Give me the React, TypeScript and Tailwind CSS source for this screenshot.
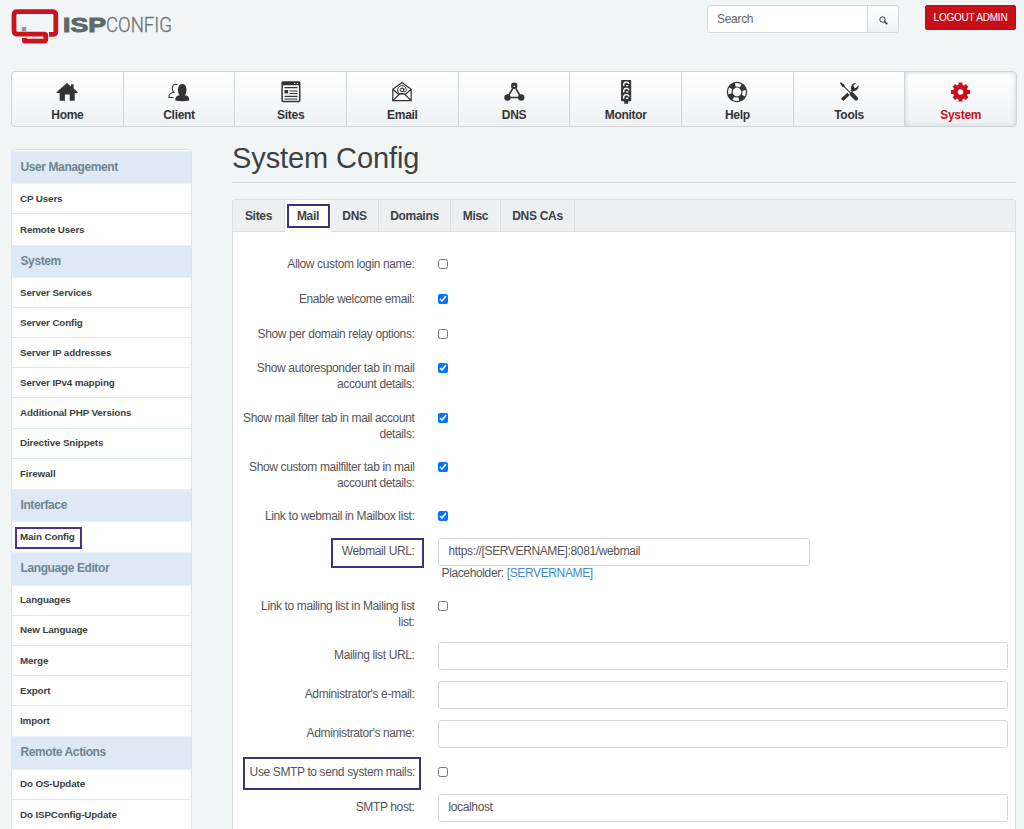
import type { ReactNode } from "react";
import clsx from "clsx";

function Logo() {
  return (
    <svg width="168" height="36" viewBox="0 0 168 36" className="mt-[9px]">
      <g fill="none" stroke="#c9141d" strokeWidth="4.8" strokeLinejoin="round">
        <path d="M38 25.400h3.800c2 0 3-1 3-3V6c0-2.500-1-3.400-3.400-3.400H6.400C4 2.600 3 3.500 3 6v15.500c0 2.500 1 3.600 3.400 3.600h26.400c1.400 0 2 .7 2 1.800v3c0 1.500-.8 2.300-2.300 2.300H13.500v-3.200" />
      </g>
      <rect x="10.800" y="18" width="4.400" height="4.400" fill="#8c9799" />
      <text x="52" y="22.700" textLength="43" lengthAdjust="spacingAndGlyphs" fill="#5e696b" stroke="#5e696b" strokeWidth="0.900" className="font-['Liberation_Sans',sans-serif] text-[19.500px] font-bold">
        ISP
      </text>
      <text x="95" y="22.700" textLength="66" lengthAdjust="spacingAndGlyphs" fill="#697476" stroke="#697476" strokeWidth="0.300" className="font-[Roboto,sans-serif] text-[19.500px] font-light">
        CONFIG
      </text>
    </svg>
  );
}

const icons: Record<string, ReactNode> = {
  Home: <path d="M12 3 16 6.400V4.300h2.600v4.300L22.700 12v1h-3v7.700h-5v-6.200H9.900v6.200H4.700V13h-3v-1z" />,
  Client: (
    <>
      <path d="M8.300 20.500c-.3-3.300 1.200-4.600 4.200-5.200-2.300-3.200-2.300-11.300 2.800-11.300s5 8.100 2.600 11.300c3 .6 4.600 1.900 4.300 5.200-4.500 1-9.400 1-13.900 0z" />
      <path d="M10.500 4.800C7.300 3.300 4.800 5.700 5.300 9c.2 1.500.8 2.600 1.500 3.300-2.500.4-5.200 1.400-4.800 5.200h4.500" fill="none" stroke="currentColor" strokeWidth="1.100" />
    </>
  ),
  Sites: (
    <>
      <rect x="3.100" y="2.100" width="17.600" height="19.300" rx="1" fill="none" stroke="currentColor" strokeWidth="1.500" />
      <path d="M3 2h18v3.200H3z" />
      <path d="M5.500 7.700h13M10.500 11h8M10.500 13.500h8M5.500 16.300h13M5.500 19h13" fill="none" stroke="currentColor" strokeWidth="1.200" />
      <path d="M5.500 10h3.600v3.500H5.500z" />
      <path d="M15 3.500h1.200m1.500 0h1.200" stroke="#fff" strokeWidth="1" />
    </>
  ),
  Email: (
    <>
      <path d="M2.800 9.300 12 2.500l9.200 6.800v11.400H2.800zM2.800 9.300l6.400 5.500m12-5.500-6.400 5.500M2.800 20.700 9 14.500c2-1.500 4-1.500 6 0l6.200 6.200" fill="none" stroke="currentColor" strokeWidth="1.200" />
      <circle cx="12" cy="9.900" r="1.800" fill="none" stroke="currentColor" strokeWidth="1" />
      <path d="M13.800 8v3c0 1.400 2.500 1.300 2.500-1.200 0-5.500-8.600-5.500-8.600.2 0 4 3.300 4.900 6 3.700" fill="none" stroke="currentColor" strokeWidth="1" />
    </>
  ),
  DNS: (
    <>
      <circle cx="12.200" cy="5.700" r="3.200" />
      <circle cx="5.500" cy="17.500" r="3.200" />
      <circle cx="19.200" cy="17.500" r="3.200" />
      <path d="m11 8-4.300 7.300M13.800 8.500l4 6.700M8 17.500h8" fill="none" stroke="currentColor" strokeWidth="1.600" />
      <circle cx="12.200" cy="6.200" r="0.800" fill="#fff" />
    </>
  ),
  Monitor: (
    <>
      <path d="M7.800 0h8.700c.5 0 .7.300.7.700v19.500c0 .7-.3 1-.9 1h-2.100v2.500h-4v-2.500H8c-.6 0-.9-.3-.9-1V.7c0-.4.2-.7.700-.7z" />
      <path d="M9.800 6c-1.200-4.400 4.400-5.200 5.200-2M9.800 12.300c-1.200-4.400 4.400-5.200 5.200-2M9.800 18.600c-1.200-4.400 4.400-5.200 5.200-2" fill="none" stroke="#fff" strokeWidth="1.500" />
      <path d="M12 5h2.300v1.300H12zM12 11.300h2.300v1.300H12zM12 17.600h2.300v1.300H12z" fill="#fff" />
    </>
  ),
  Help: (
    <>
      <circle cx="12" cy="12" r="9.600" fill="none" stroke="currentColor" strokeWidth="1.200" />
      <circle cx="12" cy="12" r="5" fill="none" stroke="currentColor" strokeWidth="1.200" />
      <circle cx="12" cy="12" r="7.300" fill="none" stroke="currentColor" strokeWidth="4.800" strokeDasharray="5.730 5.730" transform="rotate(30 12 12)" />
    </>
  ),
  Tools: (
    <>
      <path d="m2.800 3 1.100-.8 3.500 2.500.6 2 5.500 5.500c1-.5 1.900-.3 2.600.4l4.500 4.700c1.500 1.700-.8 4.400-2.700 2.900l-4.700-4.700c-.7-.8-.9-1.600-.4-2.500L7.200 7.600l-1.900-.8z" />
      <path d="M14.100 10.300c-.9-3.700 1.200-7.700 5.100-7.500l-2.700 3 .5 1.700 1.900.4 2.600-2.800c.8 3.600-2.200 6.400-5.200 6l-1.200 1.200-2-2zM10.400 12.800l2.100 2.100-5 5.200c-1.600 1.600-4.200-.8-2.600-2.400z" />
    </>
  ),
  System: (
    <>
      <circle cx="11.500" cy="12" r="5.100" fill="none" stroke="currentColor" strokeWidth="4.700" />
      <path
        d="M11.500 2.400v3.600M11.500 18v3.600M1.900 12h3.600M17.500 12h3.600M4.900 5.400l2.400 2.400M15.700 16.200l2.400 2.400M18.100 5.400l-2.400 2.400M7.300 16.200l-2.400 2.400"
        fill="none"
        stroke="currentColor"
        strokeWidth="3.900"
      />
    </>
  ),
};

const navItems = ["Home", "Client", "Sites", "Email", "DNS", "Monitor", "Help", "Tools", "System"];

const sidebar = [
  { title: "User Management", items: ["CP Users", "Remote Users"] },
  {
    title: "System",
    items: [
      "Server Services",
      "Server Config",
      "Server IP addresses",
      "Server IPv4 mapping",
      "Additional PHP Versions",
      "Directive Snippets",
      "Firewall",
    ],
  },
  { title: "Interface", items: ["Main Config"] },
  { title: "Language Editor", items: ["Languages", "New Language", "Merge", "Export", "Import"] },
  { title: "Remote Actions", items: ["Do OS-Update", "Do ISPConfig-Update"] },
];

const tabs = [
  { label: "Sites", width: "w-[52px]" },
  { label: "Mail", width: "w-[46px]" },
  { label: "DNS", width: "w-[48px]" },
  { label: "Domains", width: "w-[72px]" },
  { label: "Misc", width: "w-[50px]" },
  { label: "DNS CAs", width: "w-[74px]" },
];

function Header() {
  return (
    <header className="flex h-[71px] items-start pl-[11px] pr-2">
      <Logo />
      <div className="ml-auto mt-[5px] flex h-7 w-[192px] overflow-hidden rounded-[3px] border border-[#d3d7da] bg-white">
        <input
          placeholder="Search"
          className="w-[159px] px-[9px] pb-px text-xs tracking-[-0.300px] text-[#555] outline-none placeholder:text-[#666]"
        />
        <button className="flex flex-1 items-center justify-center border-l border-[#d3d7da] bg-gradient-to-b from-white to-[#f1f3f5]">
          <svg width="9" height="9" viewBox="0 0 9 9" className="mt-0.5" fill="none" stroke="#333">
            <circle cx="3.500" cy="3.500" r="2.700" />
            <path d="m5.500 5.500 2.800 2.800" strokeWidth="1.600" />
          </svg>
        </button>
      </div>
      <button className="ml-[26px] mt-[5px] h-[25px] w-[91px] whitespace-nowrap rounded-[2px] border border-[#b80f18] bg-[#c9101a] pb-px text-[10px] tracking-[-0.220px] text-white">
        LOGOUT ADMIN
      </button>
    </header>
  );
}

function MainNav() {
  return (
    <nav className="ml-[11px] mr-[7px] flex h-14 overflow-hidden rounded-[4px] border border-[#d2d5d7] bg-gradient-to-b from-white to-[#eff1f3]">
      {navItems.map((name) => (
        <a
          key={name}
          className={clsx(
            "flex flex-1 flex-col items-center border-r border-[#d2d5d7] pt-2 text-xs font-bold last:border-r-0",
            name === "System" ? "text-[#c9101a] shadow-[inset_0_0_5px_0_#cbd0d4]" : "text-[#333]"
          )}
        >
          <svg width="24" height="24" viewBox="0 0 24 24" fill="currentColor">
            {icons[name]}
          </svg>
          <span className="mt-[3px] leading-4 tracking-[-0.300px]">{name}</span>
        </a>
      ))}
    </nav>
  );
}

function Sidebar() {
  return (
    <aside className="mt-[22px] h-[700px] w-[181px] shrink-0 rounded-t-[4px] border border-[#d9e5ee] bg-white pt-px">
      {sidebar.map((section) => (
        <section key={section.title}>
          <h2 className="flex h-[33.300px] items-center border-y border-[#e8f0f6] bg-[#dfe9f5] pb-px pl-[8.500px] text-xs font-bold tracking-[-0.400px] text-[#6d858f]">
            {section.title}
          </h2>
          {section.items.map((item) => (
            <div
              key={item}
              className="flex h-[30.150px] items-center border-b border-[#dce7ec] pl-2 pt-px text-[9.800px] font-bold tracking-[-0.120px] text-[#3b3f42] last:border-b-0"
            >
              {item === "Main Config" ? (
                <span className="-ml-[5px] flex h-[22px] w-[67px] items-center whitespace-nowrap border-2 border-[#4b3485] px-[3px]">
                  {item}
                </span>
              ) : (
                item
              )}
            </div>
          ))}
        </section>
      ))}
    </aside>
  );
}

type RowProps = {
  label: string;
  height: string;
  children: ReactNode;
  labelClass?: string;
};

function Row({ label, height, children, labelClass = "w-[181.500px] pl-2 mr-[23px]" }: RowProps) {
  return (
    <div className={clsx("flex shrink-0 items-start", height)}>
      <div className={clsx("shrink-0 text-right leading-4", labelClass)}>{label}</div>
      {children}
    </div>
  );
}

function Check({ checked = false }: { checked?: boolean }) {
  return <input type="checkbox" defaultChecked={checked} className="mt-[3px] h-[10px] w-[10px]" />;
}

function Field({ value = "", width = "w-[570px]" }: { value?: string; width?: string }) {
  return (
    <input
      defaultValue={value}
      className={clsx("h-7 rounded-[3px] border border-[#d3d6d8] bg-white px-[10px] pb-px text-[#555] outline-none", width)}
    />
  );
}

const fieldLabel = "w-[181.500px] mr-[23px] pt-[5.500px]";

function ConfigForm() {
  return (
    <div className="flex flex-col pt-[24.300px] text-xs tracking-[-0.370px] text-[#555]">
      <Row label="Allow custom login name:" height="h-[34.700px]"><Check /></Row>
      <Row label="Enable welcome email:" height="h-[34.700px]"><Check checked /></Row>
      <Row label="Show per domain relay options:" height="h-[34.700px]"><Check /></Row>
      <Row label="Show autoresponder tab in mail account details:" height="h-[49.400px]"><Check checked /></Row>
      <Row label="Show mail filter tab in mail account details:" height="h-[49.300px]"><Check checked /></Row>
      <Row label="Show custom mailfilter tab in mail account details:" height="h-[49.300px]"><Check checked /></Row>
      <Row label="Link to webmail in Mailbox list:" height="h-[29.500px]"><Check checked /></Row>
      <Row
        label="Webmail URL:"
        height="h-[59.700px]"
        labelClass="ml-[97.500px] mr-[14px] h-[30px] w-[93px] pt-[5.500px] pr-[9px] outline-2 -outline-offset-2 outline-[#40307f]"
      >
        <div>
          <Field value="https://[SERVERNAME]:8081/webmail" width="w-[372px]" />
          <p className="pl-1 leading-[14px]">
            Placeholder: <a className="text-[#428bca]">[SERVERNAME]</a>
          </p>
        </div>
      </Row>
      <Row label="Link to mailing list in Mailing list list:" height="h-[44.300px]" labelClass="w-[181.500px] mr-[23px] pl-5">
        <Check />
      </Row>
      <Row label="Mailing list URL:" height="h-[39px]" labelClass={fieldLabel}><Field /></Row>
      <Row label="Administrator's e-mail:" height="h-[39px]" labelClass={fieldLabel}><Field /></Row>
      <Row label="Administrator's name:" height="h-[44px]" labelClass={fieldLabel}><Field /></Row>
      <Row
        label="Use SMTP to send system mails:"
        height="h-[30px]"
        labelClass="-mt-[7px] ml-[10px] mr-[16.500px] h-[33px] w-[178px] whitespace-nowrap pr-[6px] pt-[7px] outline-2 -outline-offset-2 outline-[#40307f]"
      >
        <Check />
      </Row>
      <Row label="SMTP host:" height="h-[39px]" labelClass={fieldLabel}><Field value="localhost" /></Row>
    </div>
  );
}

export default function App() {
  return (
    <div className="h-[829px] w-[1024px] overflow-hidden bg-[#f1f5f6] font-['Liberation_Sans',Arial,sans-serif]">
      <Header />
      <MainNav />
      <div className="flex pl-[11px]">
        <Sidebar />
        <main className="ml-[40px] w-[784px]">
          <h1 className="mt-[13px] h-[43px] border-b border-[#d4d8db] text-[29px] leading-[37px] tracking-[-0.100px] text-[#3d4144]">
            System Config
          </h1>
          <div className="mt-4 h-[700px] rounded-t-[3px] border border-[#dcdfe2] bg-white">
            <div className="flex h-8 border-b border-[#dcdfe2] bg-[#edeff1] text-xs font-bold tracking-[-0.300px] text-[#3d4144]">
              {tabs.map((tab) => (
                <div
                  key={tab.label}
                  className={clsx(
                    "flex items-center justify-center",
                    tab.width,
                    tab.label === "Mail" ? "-mb-px bg-white pb-px" : "border-r border-[#dcdfe2]"
                  )}
                >
                  {tab.label === "Mail" ? (
                    <span className="flex h-6 w-[43px] shrink-0 items-center justify-center border-2 border-[#40307f]">
                      Mail
                    </span>
                  ) : (
                    tab.label
                  )}
                </div>
              ))}
            </div>
            <ConfigForm />
          </div>
        </main>
      </div>
    </div>
  );
}
